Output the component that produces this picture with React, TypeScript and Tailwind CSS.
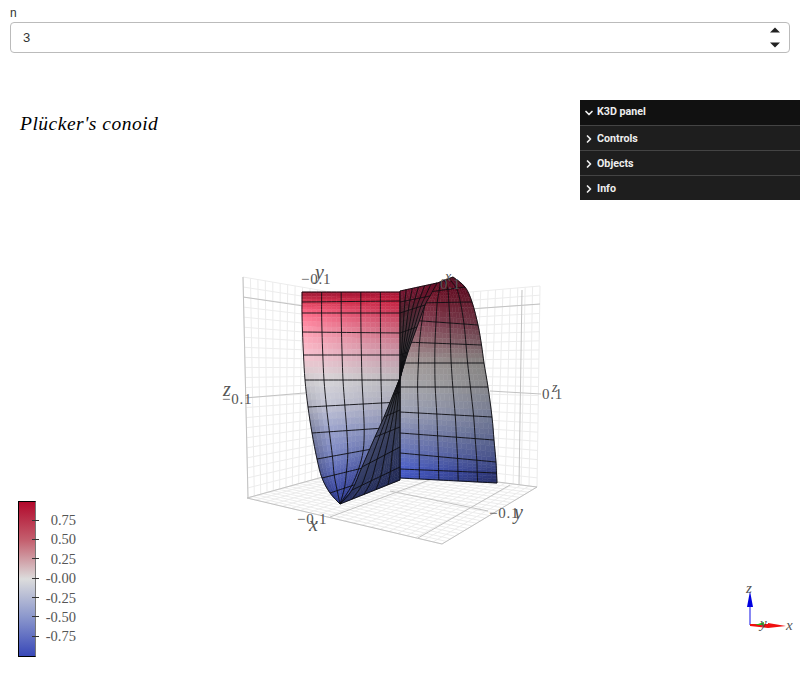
import { ChevronDown, ChevronRight } from 'lucide-react'

type Pt = [number, number]
type Rgb = [number, number, number]

const hex = (h: string): Rgb => [
  parseInt(h.slice(1, 3), 16),
  parseInt(h.slice(3, 5), 16),
  parseInt(h.slice(5, 7), 16),
]

const mix = (a: number, b: number, t: number) => a + (b - a) * t

// catmull-rom along an edge table, t in rows
function edge(table: Pt[], t: number): Pt {
  const i = Math.min(Math.floor(t), table.length - 2)
  const f = t - i
  const p0 = table[Math.max(i - 1, 0)]
  const p1 = table[i]
  const p2 = table[i + 1]
  const p3 = table[Math.min(i + 2, table.length - 1)]
  const c = (k: 0 | 1) =>
    0.5 *
    (2 * p1[k] +
      (p2[k] - p0[k]) * f +
      (2 * p0[k] - 5 * p1[k] + 4 * p2[k] - p3[k]) * f * f +
      (3 * p1[k] - p0[k] - 3 * p2[k] + p3[k]) * f * f * f)
  return [c(0), c(1)]
}

function shade(table: string[], t: number): Rgb {
  const i = Math.min(Math.floor(t), table.length - 2)
  const f = t - i
  const a = hex(table[i])
  const b = hex(table[i + 1])
  return [mix(a[0], b[0], f), mix(a[1], b[1], f), mix(a[2], b[2], f)]
}

type Patch = {
  a: Pt[]
  b: Pt[]
  ca: string[]
  cb: string[]
  cols: number
  rim?: number
}

const at = (p: Patch, u: number, t: number): Pt => {
  const pa = edge(p.a, t)
  const pb = edge(p.b, t)
  return [mix(pa[0], pb[0], u), mix(pa[1], pb[1], u)]
}

function Surface({ patch }: { patch: Patch }) {
  const rows = patch.a.length - 1
  const su = 4
  const sv = 4
  const cells = []
  for (let j = 0; j < rows * sv; j++) {
    for (let i = 0; i < patch.cols * su; i++) {
      const u0 = i / (patch.cols * su)
      const u1 = (i + 1) / (patch.cols * su)
      const t0 = j / sv
      const t1 = (j + 1) / sv
      const q = [at(patch, u0, t0), at(patch, u1, t0), at(patch, u1, t1), at(patch, u0, t1)]
      const um = (u0 + u1) / 2
      const tm = (t0 + t1) / 2
      const ca = shade(patch.ca, tm)
      const cb = shade(patch.cb, tm)
      // the left edge of the lower half curves away from the light
      let rim = 1
      if (patch.rim && um < 0.2 && tm > 4) rim = mix(mix(1, patch.rim, Math.min((tm - 4) / 3, 1)), 1, um / 0.2)
      const c = [0, 1, 2].map((k) => Math.round(mix(ca[k], cb[k], um) * rim))
      const col = `rgb(${c[0]},${c[1]},${c[2]})`
      cells.push(
        <polygon
          key={`${i}-${j}`}
          points={q.map((p) => p.join(',')).join(' ')}
          fill={col}
          stroke={col}
          strokeWidth={0.5}
        />,
      )
    }
  }
  const lines = []
  for (let j = 0; j <= rows; j++) {
    const pts: string[] = []
    for (let i = 0; i <= patch.cols * su; i++) pts.push(at(patch, i / (patch.cols * su), j).join(','))
    lines.push(<polyline key={`r${j}`} points={pts.join(' ')} fill="none" stroke="#0c0c10" strokeWidth={0.9} />)
  }
  for (let i = 0; i <= patch.cols; i++) {
    const pts: string[] = []
    for (let j = 0; j <= rows * sv; j++) pts.push(at(patch, i / patch.cols, j / sv).join(','))
    lines.push(<polyline key={`c${i}`} points={pts.join(' ')} fill="none" stroke="#0c0c10" strokeWidth={0.9} />)
  }
  return (
    <g>
      {cells}
      {lines}
    </g>
  )
}

// front left wing, its inner side runs on under the dark sliver
const wingA: Patch = {
  a: [[302, 292], [302, 302], [302, 313], [302.5, 332], [303.5, 355], [305, 380], [308, 407], [312, 433], [317, 459], [322, 478], [330, 493], [340, 504]],
  b: [[400, 292], [400, 301], [400, 313], [400, 333], [400, 355], [400, 380], [400, 402], [399, 427], [394, 445], [383, 463], [366, 481], [340, 504]],
  ca: ['#8f0f2c', '#d83a55', '#ff6a88', '#ffa0b4', '#f8c4d0', '#dfdde0', '#c9cbdc', '#a0a8d4', '#7f8bcc', '#5c6abf', '#404eb0', '#2a3a98'],
  cb: ['#a01232', '#c4203f', '#c83a58', '#c96c82', '#c89aaa', '#b9b8bc', '#a8a8b8', '#8088b0', '#5f6aa0', '#454f90', '#343e80', '#2a3890'],
  cols: 5,
  rim: 0.75,
}

// back right wing, top part runs on under the upper sliver
const wingB: Patch = {
  a: [[432, 285], [422, 293], [414, 303], [408, 320], [404, 342], [402, 363], [400, 387], [400, 412], [400, 433], [400, 453], [400, 469], [400, 478]],
  b: [[453, 277], [465, 287], [472, 302], [478, 325], [481.5, 345], [484, 363], [488, 387], [492, 417], [494, 440], [496, 462], [496.5, 473], [497, 483]],
  ca: ['#5e0a20', '#741428', '#7c2438', '#8c4458', '#9a7078', '#a69c9c', '#acacb0', '#a0a4b8', '#8088b4', '#6674bc', '#4c60cc', '#3e52c0'],
  cb: ['#4e0a1e', '#5a0a20', '#641c2e', '#6a3644', '#7a5f66', '#868482', '#88888c', '#737a94', '#5c668e', '#424c88', '#2f3878', '#242c60'],
  cols: 5,
}

// dark back side slivers
const topFan: Patch = {
  a: [[400, 291], [400, 302], [400, 313], [400, 333], [400, 355], [400, 378]],
  b: [[437, 283], [430, 296], [425, 305], [417, 327], [408, 352], [400, 378]],
  ca: ['#7a1230', '#5e1428', '#4a1c28', '#3c262c', '#343034', '#303034'],
  cb: ['#6a0c26', '#6a1a30', '#5e2838', '#503a44', '#404044', '#303034'],
  cols: 6,
}

const lowFan: Patch = {
  a: [[400, 378], [400, 392], [400, 410], [400, 427], [400, 447], [400, 467], [400, 480]],
  b: [[400, 378], [393, 395], [384, 417], [375, 437], [362, 467], [352, 490], [340, 504]],
  ca: ['#303034', '#33353a', '#343844', '#343a52', '#2e3658', '#262e58', '#1e2650'],
  cb: ['#303034', '#3c3e44', '#41455a', '#424868', '#3c4468', '#303a64', '#222a60'],
  cols: 5,
}

const lerpPt = (a: Pt, b: Pt, t: number): Pt => [mix(a[0], b[0], t), mix(a[1], b[1], t)]

function Wall({ tl, tr, bl, br, nu, nv }: { tl: Pt; tr: Pt; bl: Pt; br: Pt; nu: number; nv: number }) {
  const out = []
  for (let i = 0; i <= nu; i++) {
    const p = lerpPt(tl, tr, i / nu)
    const q = lerpPt(bl, br, i / nu)
    out.push(<line key={`u${i}`} x1={p[0]} y1={p[1]} x2={q[0]} y2={q[1]} stroke="#ececec" strokeWidth={1} />)
  }
  for (let i = 0; i <= nv; i++) {
    const p = lerpPt(tl, bl, i / nv)
    const q = lerpPt(tr, br, i / nv)
    out.push(<line key={`v${i}`} x1={p[0]} y1={p[1]} x2={q[0]} y2={q[1]} stroke="#ececec" strokeWidth={1} />)
  }
  return <g>{out}</g>
}

const majors: [number, number, number, number][] = [
  [243, 297, 330, 310],
  [245, 398, 340, 390],
  [243, 277, 248, 498],
  [540, 304, 470, 309],
  [541, 394, 490, 391],
  [522, 290, 519, 485],
  [247, 498, 442, 544],
  [247, 498, 330, 475],
  [442, 544, 537, 487],
  [537, 487, 490, 481],
  [418, 538, 510, 485],
  [330, 517, 440, 476],
  [488, 511, 390, 491],
]

const numLabels: [string, number, number][] = [
  ['−0.1', 301, 284],
  ['−0.1', 222, 404],
  ['0.1', 542, 399],
  ['0.1', 440, 289],
  ['−0.1', 297, 524],
  ['−0.1', 489, 518],
]

const axisLabels: [string, number, number, number][] = [
  ['y', 315, 279, 20],
  ['z', 223, 396, 20],
  ['z', 552, 392, 14],
  ['x', 445, 281, 14],
  ['x', 309, 531, 20],
  ['y', 514, 519, 20],
]

const ticks = ['0.75', '0.50', '0.25', '-0.00', '-0.25', '-0.50', '-0.75']

function PanelRow({ label, open }: { label: string; open?: boolean }) {
  return (
    <div
      className={`flex h-[25px] items-center gap-[2px] pl-[3px] text-[10.7px] font-bold text-[#eeeeee] ${
        open ? 'bg-[#111111]' : 'border-t border-[#444444] bg-[#1e1e1e] pt-[2px]'
      }`}
    >
      {open ? <ChevronDown size={12} strokeWidth={3.4} /> : <ChevronRight size={12} strokeWidth={3.4} />}
      <span>{label}</span>
    </div>
  )
}

export default function App() {
  return (
    <div className="h-[675px] w-[800px] overflow-hidden bg-white font-['Liberation_Sans',sans-serif]">
      <div className="px-[10px] pt-[6px]">
        <div className="h-[16px] text-[12px] leading-[14px] text-[#333333]">n</div>
        <div className="flex h-[31px] items-center justify-between rounded border border-[#bbbbbb] pl-[12px] pr-[8px] text-[13px] text-[#333333]">
          <span>3</span>
          <svg width="12" height="22" viewBox="0 0 12 22">
            <path d="M1 5.5 L6 0.5 L11 5.5 Z" fill="#222222" />
            <path d="M1 15.5 L6 20.5 L11 15.5 Z" fill="#222222" />
          </svg>
        </div>
      </div>

      <div className="relative mt-[47px] h-[575px] w-[800px]">
        <svg className="absolute left-0 top-0" width="800" height="575" viewBox="0 100 800 575">
          <Wall tl={[243, 277]} tr={[377, 300]} bl={[248, 498]} br={[362, 466]} nu={18} nv={22} />
          <Wall tl={[377, 300]} tr={[540, 286]} bl={[362, 466]} br={[537, 487]} nu={22} nv={22} />
          <Wall tl={[362, 466]} tr={[537, 487]} bl={[247, 498]} br={[442, 544]} nu={22} nv={22} />
          {majors.map(([x1, y1, x2, y2], i) => (
            <line key={i} x1={x1} y1={y1} x2={x2} y2={y2} stroke="#c2c2c2" strokeWidth={1} />
          ))}
          <Surface patch={wingB} />
          <Surface patch={wingA} />
          <Surface patch={topFan} />
          <Surface patch={lowFan} />
          <g className="font-['Liberation_Serif',serif]">
            {numLabels.map(([t, x, y], i) => (
              <text key={i} x={x} y={y} fontSize={15} letterSpacing={0.8} fill="#555555">
                {t}
              </text>
            ))}
            {axisLabels.map(([t, x, y, s], i) => (
              <text key={i} x={x} y={y} fontSize={s} fontStyle="italic" fill="#555555">
                {t}
              </text>
            ))}
          </g>
          {/* axes helper */}
          <line x1="750" y1="625" x2="750" y2="600" stroke="#6a6af0" strokeWidth={1.6} />
          <path d="M750 591 L753 607 L747 607 Z" fill="#0000e0" />
          <path d="M750 624 L768 624 L768 623 L786 626 L768 628 L750 626 Z" fill="#f01010" />
          <path d="M755 625 L764 622 L764 625 Z" fill="#20c020" />
          <g className="font-['Liberation_Serif',serif]" fontStyle="italic" fontSize={15} fill="#555555">
            <text x="746" y="593">z</text>
            <text x="760" y="628">y</text>
            <text x="786" y="630">x</text>
          </g>
        </svg>

        <div className="absolute left-[20px] top-[12px] font-['Liberation_Serif',serif] text-[19.5px] italic leading-[24px] tracking-[0.5px] text-black">
          Plücker's conoid
        </div>

        <div className="absolute right-0 top-0 w-[220px] font-['Roboto',sans-serif]">
          <PanelRow label="K3D panel" open />
          <PanelRow label="Controls" />
          <PanelRow label="Objects" />
          <PanelRow label="Info" />
        </div>

        <div className="absolute left-[18px] top-[401px] flex h-[156px] w-[60px]">
          <div className="h-full w-[18px] border border-black border-r-[#777777] bg-[linear-gradient(to_bottom,#b2092c,#c4606f_25%,#dcdcdc_50%,#8a96cc_75%,#3848b8)]" />
          <div className="absolute left-[14px] top-[12px] flex flex-col gap-[5.4px] font-['Liberation_Serif',serif] text-[14.5px] leading-[14px] text-[#555555]">
            {ticks.map((t) => (
              <div key={t} className="flex h-[14px] w-[44px] items-center">
                <div className="h-px w-[7px] bg-[#333333]" />
                <div className="flex-1 text-right">{t}</div>
              </div>
            ))}
          </div>
        </div>
      </div>
    </div>
  )
}
